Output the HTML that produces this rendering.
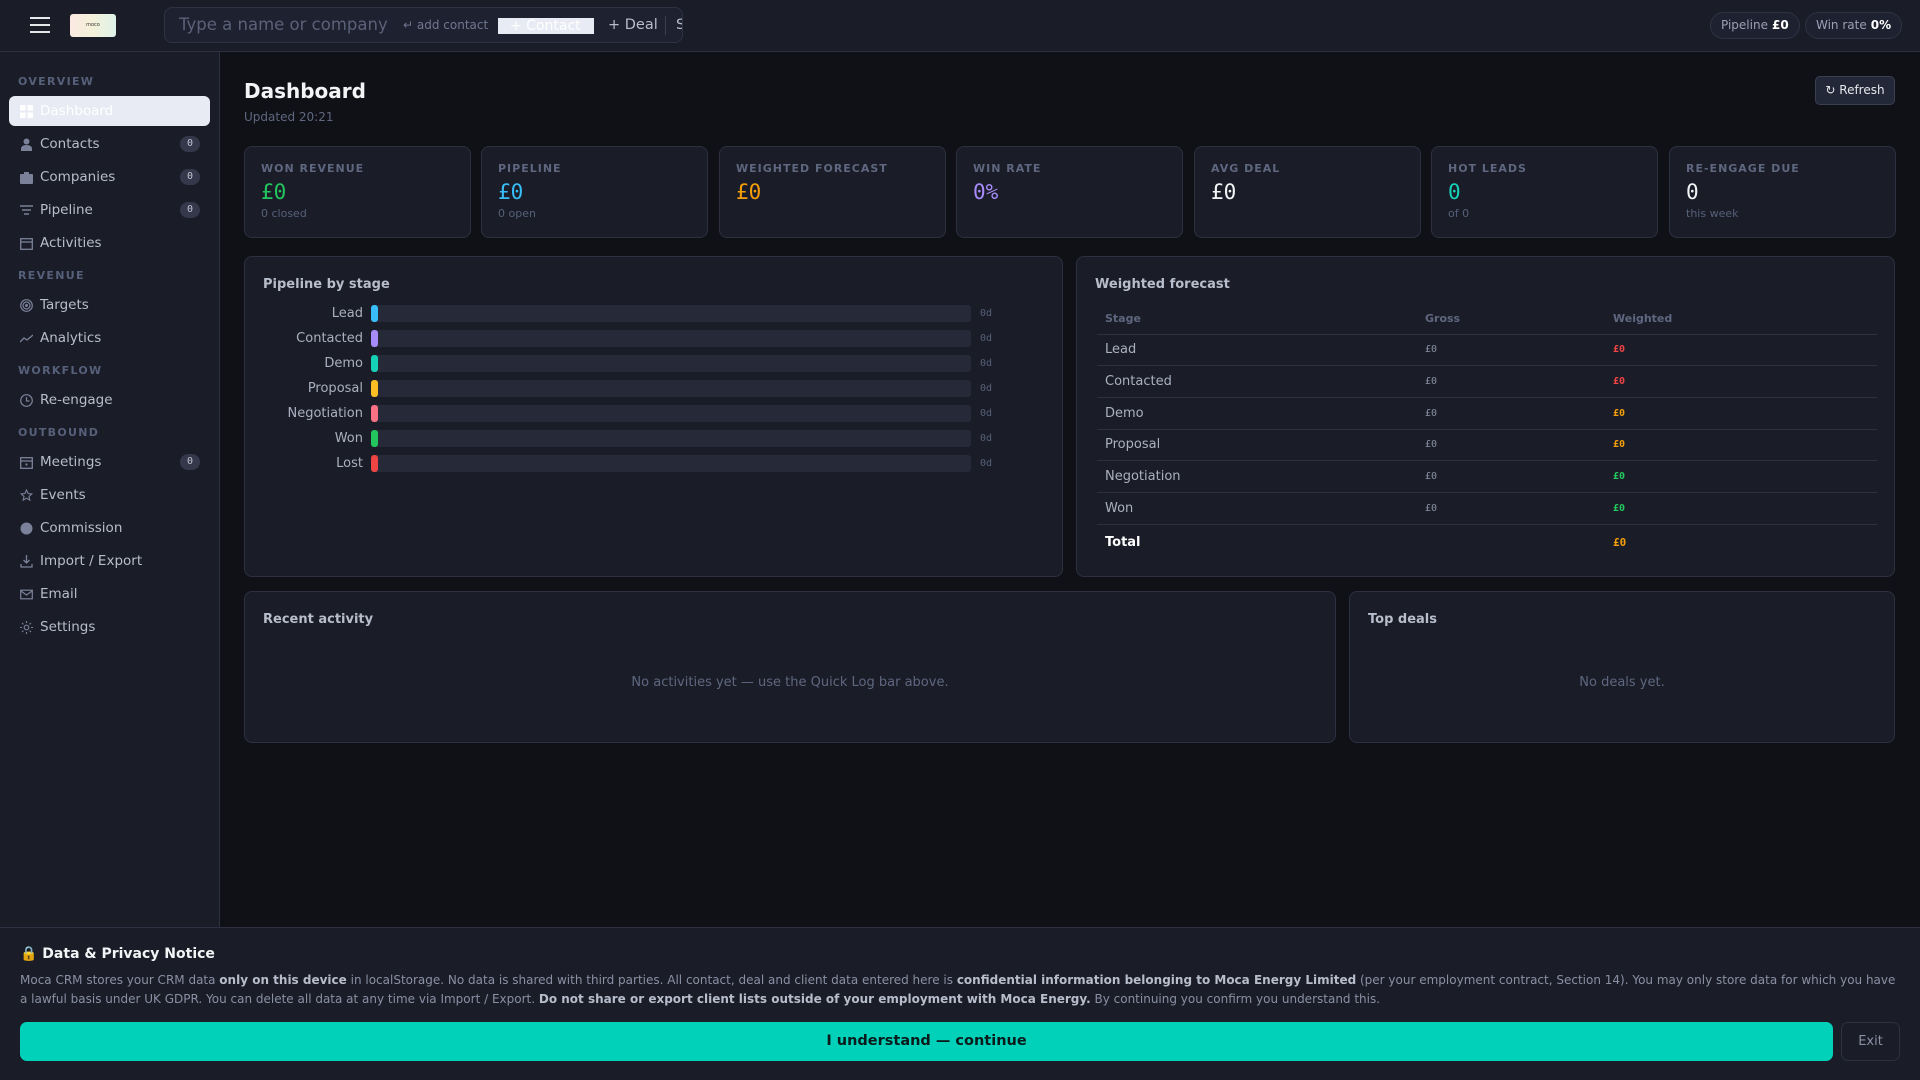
<!DOCTYPE html>
<html><head><meta charset="utf-8">
<style>
*{box-sizing:border-box;margin:0;padding:0}
body{width:1920px;height:1080px;overflow:hidden;background:#0f1116;font-family:"DejaVu Sans","Liberation Sans",sans-serif;color:#e5e7eb;position:relative}
.top{position:absolute;left:0;top:0;width:1920px;height:52px;background:#1a1d27;border-bottom:1px solid #2c3040}
.ham{position:absolute;left:30px;top:17px;width:20px;height:16px}
.ham i{display:block;height:2px;background:#e5e7eb;margin-bottom:5px}
.logo{position:absolute;left:70px;top:14px;width:46px;height:23px;border-radius:3px;background:linear-gradient(90deg,#fbe9e2,#f4f1d8,#dff3ea);font-size:5px;color:#333;text-align:center;line-height:23px}
.search{position:absolute;left:164px;top:7px;width:519px;height:36px;border:1px solid #2e3242;border-radius:8px;background:#1e2230;overflow:hidden;white-space:nowrap}
.search span{position:absolute;top:0;line-height:34px}
.pill{position:absolute;top:12px;height:27px;border:1px solid #2e3242;border-radius:14px;background:#1e2230;font-size:12px;color:#9aa0b4;line-height:25px;padding:0 10px}
.pill b{color:#fff;margin-left:4px}
.side{position:absolute;left:0;top:52px;width:220px;height:875px;background:#1a1d27;border-right:1px solid #2c3040}
.sec{position:absolute;left:18px;font-size:11px;font-weight:bold;letter-spacing:1.3px;color:#56607a}
.it{position:absolute;left:9px;width:201px;height:30px;font-size:13.5px;color:#b8bdcc;line-height:30px;padding-left:31px;border-radius:6px}
.it.act{background:#e8ebf3;color:#fff}
.it .ic{position:absolute;left:11px;top:9px;width:13px;height:13px}
.badge{position:absolute;right:10px;top:7px;width:20px;height:16px;border-radius:8px;background:#34384a;font-size:10px;color:#c0c4d0;text-align:center;line-height:16px;font-family:"DejaVu Sans Mono",monospace}
.h1{position:absolute;left:244px;top:79px;font-size:20px;font-weight:bold;color:#f3f4f6}
.upd{position:absolute;left:244px;top:110px;font-size:12px;color:#5f6780}
.refresh{position:absolute;left:1815px;top:76px;width:80px;height:29px;border:1px solid #3a3f52;border-radius:5px;background:#232838;font-size:12px;color:#e5e7eb;text-align:center;line-height:27px}
.card{position:absolute;top:146px;width:227px;height:92px;background:#1a1d27;border:1px solid #2c3040;border-radius:8px;padding:15px 0 0 16px}
.lab{font-size:11px;font-weight:bold;letter-spacing:1px;color:#5f6780}
.val{font-family:"DejaVu Sans Mono",monospace;font-size:21px;margin-top:4px;line-height:26px}
.sub{font-size:11px;color:#56607a;margin-top:2px}
.panel{position:absolute;background:#1a1d27;border:1px solid #2c3040;border-radius:8px}
.pt{position:absolute;left:18px;top:20px;font-size:13px;font-weight:bold;color:#b8bdcc}
.row{position:absolute;left:0;width:800px;height:18px}
.row .l{position:absolute;right:682px;font-size:13px;color:#aab0c0;line-height:18px;white-space:nowrap}
.row .b{position:absolute;left:126px;width:600px;height:17px;background:#252938;border-radius:3px}
.row .c{position:absolute;left:126px;width:7px;height:17px;border-radius:3px}
.row .d{position:absolute;left:735px;font-size:10px;color:#56607a;line-height:18px;font-family:"DejaVu Sans Mono",monospace}
table{position:absolute;left:20px;top:47px;width:780px;border-collapse:collapse}
th{text-align:left;font-size:11px;color:#5f6780;height:30px;padding-left:8px;font-weight:bold;border-bottom:1px solid #2c3040}
td{font-size:13px;color:#aab0c0;height:31.7px;padding-left:8px;border-bottom:1px solid #2c3040}
td.m{font-family:"DejaVu Sans Mono",monospace;font-size:10px}
td.w{font-weight:bold}
tr.tot td{border-bottom:none;height:36px}
.empty{position:absolute;width:100%;text-align:center;top:81px;font-size:13px;color:#5f6780}
.ban{position:absolute;left:0;top:927px;width:1920px;height:153px;background:#1a1d27;border-top:1px solid #2c3040}
.bh{position:absolute;left:20px;top:18px;font-size:14px;font-weight:bold;color:#f3f4f6}
.bt{position:absolute;left:20px;top:43px;width:1880px;font-size:12px;line-height:19px;color:#8a90a4}
.bt b{color:#b8bdcc}
.ok{position:absolute;left:20px;top:94px;width:1813px;height:39px;background:#00d1b8;border-radius:7px;text-align:center;line-height:39px;font-size:14.5px;font-weight:bold;color:#0b1a1a}
.exit{position:absolute;left:1841px;top:94px;width:59px;height:39px;border:1px solid #2c3040;border-radius:7px;text-align:center;line-height:37px;font-size:13px;color:#8a90a4}
</style></head><body>
<div class="top">
  <div class="ham"><i></i><i></i><i></i></div>
  <div class="logo">moco</div>
  <div class="search">
    <span style="left:14px;font-size:16.5px;color:#5a6178">Type a name or company</span>
    <span style="left:238px;font-size:12px;color:#6f7690">↵ add contact</span>
    <span style="left:333px;top:10px;height:16px;width:96px;background:#e8ebf3;line-height:16px;font-size:14px;color:#fff;padding-left:12px">+ Contact</span>
    <span style="left:443px;font-size:14.5px;color:#b8bdcc">+ Deal</span>
    <span style="left:500px;top:8px;height:19px;width:1px;background:#3a3f52"></span>
    <span style="left:511px;font-size:14.5px;color:#b8bdcc">S</span>
  </div>
  <div class="pill" style="left:1710px">Pipeline<b>£0</b></div>
  <div class="pill" style="left:1805px">Win rate<b>0%</b></div>
</div>
<div class="side">
  <div class="sec" style="top:23px">OVERVIEW</div>
  <div class="it act" style="top:44px"><svg class="ic" viewBox="0 0 13 13"><rect x="0" y="0" width="5.5" height="5.5" fill="#fff"/><rect x="7.5" y="0" width="5.5" height="5.5" fill="#fff"/><rect x="0" y="7.5" width="5.5" height="5.5" fill="#fff"/><rect x="7.5" y="7.5" width="5.5" height="5.5" fill="#fff"/></svg>Dashboard</div>
  <div class="it" style="top:77px"><svg class="ic" viewBox="0 0 13 13"><circle cx="6.5" cy="3.5" r="3" fill="#7a8199"/><path d="M1 13v-2q0-4 5.5-4t5.5 4v2z" fill="#7a8199"/></svg>Contacts<span class="badge">0</span></div>
  <div class="it" style="top:110px"><svg class="ic" viewBox="0 0 13 13"><rect x="0" y="3" width="13" height="10" rx="1" fill="#7a8199"/><rect x="4" y="1" width="5" height="3" fill="#7a8199"/></svg>Companies<span class="badge">0</span></div>
  <div class="it" style="top:143px"><svg class="ic" viewBox="0 0 13 13"><path d="M0 2h13M2 6h9M4 10h5" stroke="#7a8199" stroke-width="1.6"/></svg>Pipeline<span class="badge">0</span></div>
  <div class="it" style="top:176px"><svg class="ic" viewBox="0 0 13 13"><rect x=".7" y="1.7" width="11.6" height="10.6" fill="none" stroke="#7a8199" stroke-width="1.3"/><path d="M1 5h11" stroke="#7a8199" stroke-width="1.3"/></svg>Activities</div>
  <div class="sec" style="top:217px">REVENUE</div>
  <div class="it" style="top:238px"><svg class="ic" viewBox="0 0 13 13"><circle cx="6.5" cy="6.5" r="5.8" fill="none" stroke="#7a8199" stroke-width="1.2"/><circle cx="6.5" cy="6.5" r="3.5" fill="none" stroke="#7a8199" stroke-width="1.2"/><circle cx="6.5" cy="6.5" r="1.5" fill="#7a8199"/></svg>Targets</div>
  <div class="it" style="top:271px"><svg class="ic" viewBox="0 0 13 13"><path d="M0 10l4-4 3 2 6-5" fill="none" stroke="#7a8199" stroke-width="1.3"/></svg>Analytics</div>
  <div class="sec" style="top:312px">WORKFLOW</div>
  <div class="it" style="top:333px"><svg class="ic" viewBox="0 0 13 13"><circle cx="6.5" cy="6.5" r="5.8" fill="none" stroke="#7a8199" stroke-width="1.2"/><path d="M6.5 3v4h3" fill="none" stroke="#7a8199" stroke-width="1.2"/></svg>Re-engage</div>
  <div class="sec" style="top:374px">OUTBOUND</div>
  <div class="it" style="top:395px"><svg class="ic" viewBox="0 0 13 13"><rect x=".7" y="1.7" width="11.6" height="10.6" fill="none" stroke="#7a8199" stroke-width="1.3"/><path d="M1 5h11" stroke="#7a8199" stroke-width="1.3"/><rect x="5.5" y="7.5" width="2" height="2" fill="#7a8199"/></svg>Meetings<span class="badge">0</span></div>
  <div class="it" style="top:428px"><svg class="ic" viewBox="0 0 13 13"><path d="M6.5 1l1.6 3.5 3.7.4-2.8 2.5.8 3.7-3.3-1.9-3.3 1.9.8-3.7L1.2 4.9l3.7-.4z" fill="none" stroke="#7a8199" stroke-width="1.1"/></svg>Events</div>
  <div class="it" style="top:461px"><svg class="ic" viewBox="0 0 13 13"><circle cx="6.5" cy="6.5" r="6" fill="#7a8199"/></svg>Commission</div>
  <div class="it" style="top:494px"><svg class="ic" viewBox="0 0 13 13"><path d="M6.5 0v8M3.5 5l3 3 3-3M1 9v3h11V9" fill="none" stroke="#7a8199" stroke-width="1.3"/></svg>Import / Export</div>
  <div class="it" style="top:527px"><svg class="ic" viewBox="0 0 13 13"><rect x=".7" y="2.2" width="11.6" height="8.6" fill="none" stroke="#7a8199" stroke-width="1.2"/><path d="M1 3l5.5 4 5.5-4" fill="none" stroke="#7a8199" stroke-width="1.2"/></svg>Email</div>
  <div class="it" style="top:560px"><svg class="ic" viewBox="0 0 13 13"><circle cx="6.5" cy="6.5" r="2.3" fill="none" stroke="#7a8199" stroke-width="1.2"/><path d="M6.5 0v2M6.5 11v2M0 6.5h2M11 6.5h2M2 2l1.4 1.4M9.6 9.6L11 11M2 11l1.4-1.4M9.6 3.4L11 2" stroke="#7a8199" stroke-width="1.1"/></svg>Settings</div>
</div>

<div class="h1">Dashboard</div>
<div class="upd">Updated 20:21</div>
<div class="refresh">↻ Refresh</div>

<div class="card" style="left:244px"><div class="lab">WON REVENUE</div><div class="val" style="color:#22c55e">£0</div><div class="sub">0 closed</div></div>
<div class="card" style="left:481px"><div class="lab">PIPELINE</div><div class="val" style="color:#38bdf8">£0</div><div class="sub">0 open</div></div>
<div class="card" style="left:719px"><div class="lab">WEIGHTED FORECAST</div><div class="val" style="color:#f59e0b">£0</div></div>
<div class="card" style="left:956px"><div class="lab">WIN RATE</div><div class="val" style="color:#a78bfa">0%</div></div>
<div class="card" style="left:1194px"><div class="lab">AVG DEAL</div><div class="val" style="color:#f3f4f6">£0</div></div>
<div class="card" style="left:1431px"><div class="lab">HOT LEADS</div><div class="val" style="color:#14d1b8">0</div><div class="sub">of 0</div></div>
<div class="card" style="left:1669px"><div class="lab">RE-ENGAGE DUE</div><div class="val" style="color:#f3f4f6">0</div><div class="sub">this week</div></div>

<div class="panel" style="left:244px;top:256px;width:819px;height:321px">
  <div class="pt">Pipeline by stage</div>
  <div class="row" style="top:48px"><span class="l">Lead</span><span class="b"></span><span class="c" style="background:#38bdf8"></span><span class="d">0d</span></div>
  <div class="row" style="top:73px"><span class="l">Contacted</span><span class="b"></span><span class="c" style="background:#a78bfa"></span><span class="d">0d</span></div>
  <div class="row" style="top:98px"><span class="l">Demo</span><span class="b"></span><span class="c" style="background:#14d1b8"></span><span class="d">0d</span></div>
  <div class="row" style="top:123px"><span class="l">Proposal</span><span class="b"></span><span class="c" style="background:#fbbf24"></span><span class="d">0d</span></div>
  <div class="row" style="top:148px"><span class="l">Negotiation</span><span class="b"></span><span class="c" style="background:#f87185"></span><span class="d">0d</span></div>
  <div class="row" style="top:173px"><span class="l">Won</span><span class="b"></span><span class="c" style="background:#22c55e"></span><span class="d">0d</span></div>
  <div class="row" style="top:198px"><span class="l">Lost</span><span class="b"></span><span class="c" style="background:#ef4444"></span><span class="d">0d</span></div>
</div>

<div class="panel" style="left:1076px;top:256px;width:819px;height:321px">
  <div class="pt">Weighted forecast</div>
  <table>
    <tr><th style="width:320px">Stage</th><th style="width:188px">Gross</th><th>Weighted</th></tr>
    <tr><td>Lead</td><td class="m" style="color:#8a90a4">£0</td><td class="m w" style="color:#ef4444">£0</td></tr>
    <tr><td>Contacted</td><td class="m" style="color:#8a90a4">£0</td><td class="m w" style="color:#ef4444">£0</td></tr>
    <tr><td>Demo</td><td class="m" style="color:#8a90a4">£0</td><td class="m w" style="color:#f59e0b">£0</td></tr>
    <tr><td>Proposal</td><td class="m" style="color:#8a90a4">£0</td><td class="m w" style="color:#f59e0b">£0</td></tr>
    <tr><td>Negotiation</td><td class="m" style="color:#8a90a4">£0</td><td class="m w" style="color:#22c55e">£0</td></tr>
    <tr><td>Won</td><td class="m" style="color:#8a90a4">£0</td><td class="m w" style="color:#22c55e">£0</td></tr>
    <tr class="tot"><td style="color:#fff;font-weight:bold">Total</td><td></td><td class="m w" style="color:#f59e0b;font-size:11px">£0</td></tr>
  </table>
</div>

<div class="panel" style="left:244px;top:591px;width:1092px;height:152px">
  <div class="pt">Recent activity</div>
  <div class="empty" style="top:83px">No activities yet — use the Quick Log bar above.</div>
</div>
<div class="panel" style="left:1349px;top:591px;width:546px;height:152px">
  <div class="pt">Top deals</div>
  <div class="empty" style="top:83px">No deals yet.</div>
</div>

<div class="ban">
  <div class="bh">🔒 Data &amp; Privacy Notice</div>
  <div class="bt">Moca CRM stores your CRM data <b>only on this device</b> in localStorage. No data is shared with third parties. All contact, deal and client data entered here is <b>confidential information belonging to Moca Energy Limited</b> (per your employment contract, Section 14). You may only store data for which you have a lawful basis under UK GDPR. You can delete all data at any time via Import / Export. <b>Do not share or export client lists outside of your employment with Moca Energy.</b> By continuing you confirm you understand this.</div>
  <div class="ok">I understand — continue</div>
  <div class="exit">Exit</div>
</div>
</body></html>
